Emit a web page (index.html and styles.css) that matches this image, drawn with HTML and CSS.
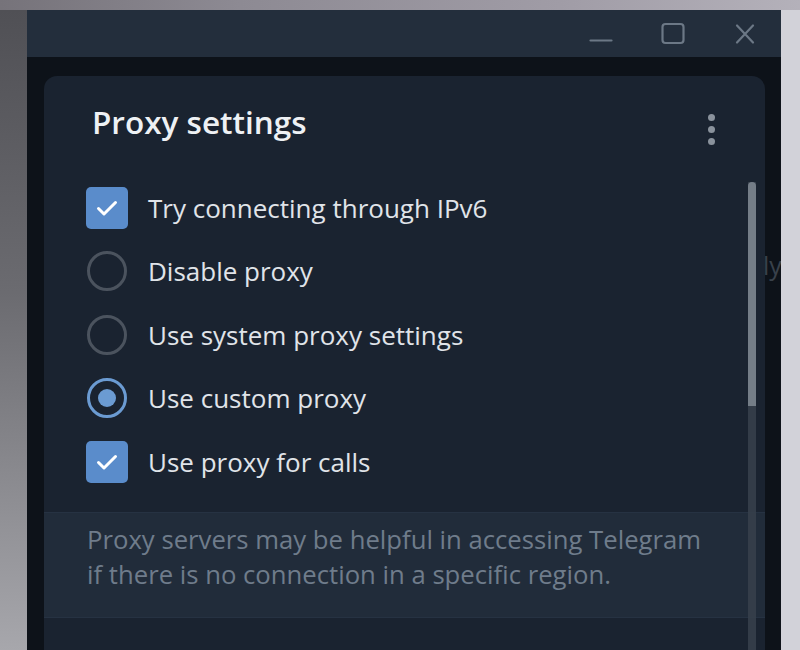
FILE: index.html
```html
<!DOCTYPE html>
<html lang="en">
<head>
    <meta charset="UTF-8">
    <meta name="viewport" content="width=device-width, initial-scale=1.0">
    <title>Proxy settings</title>
    <link rel="stylesheet" href="styles.css">
</head>
<body>
    <div class="window">
        <header class="titlebar">
            <button class="win-btn" aria-label="Minimize">
                <svg width="24" height="24" viewBox="0 0 24 24"><path d="M1.5 18.5h21" /></svg>
            </button>
            <button class="win-btn" aria-label="Maximize">
                <svg width="24" height="24" viewBox="0 0 24 24"><rect x="1.5" y="2" width="21" height="19" rx="3" /></svg>
            </button>
            <button class="win-btn" aria-label="Close">
                <svg width="24" height="24" viewBox="0 0 24 24"><path d="M4 3.5l16 17M20 3.5l-16 17" /></svg>
            </button>
        </header>

        <div class="window-body">
            <span class="behind-text">ly</span>

            <div class="card">
                <div class="card-header">
                    <h1 class="card-title">Proxy settings</h1>
                    <span class="menu-dots"><i></i><i></i><i></i></span>
                </div>

                <ul class="options">
                    <li class="option">
                        <span class="checkbox">
                            <svg width="24" height="24" viewBox="0 0 24 24"><path d="M3.5 12.5l5.5 5.5 11.5-11.5" /></svg>
                        </span>
                        <span class="option-label">Try connecting through IPv6</span>
                    </li>
                    <li class="option">
                        <span class="radio"></span>
                        <span class="option-label">Disable proxy</span>
                    </li>
                    <li class="option">
                        <span class="radio"></span>
                        <span class="option-label">Use system proxy settings</span>
                    </li>
                    <li class="option">
                        <span class="radio radio-on"></span>
                        <span class="option-label">Use custom proxy</span>
                    </li>
                    <li class="option">
                        <span class="checkbox">
                            <svg width="24" height="24" viewBox="0 0 24 24"><path d="M3.5 12.5l5.5 5.5 11.5-11.5" /></svg>
                        </span>
                        <span class="option-label">Use proxy for calls</span>
                    </li>
                </ul>

                <div class="info">
                    <p>Proxy servers may be helpful in accessing Telegram<br>if there is no connection in a specific region.</p>
                </div>

                <div class="scrollbar"><div class="scroll-thumb"></div></div>
            </div>
        </div>
    </div>
</body>
</html>
```

FILE: styles.css
```css
/* ===== RESET & BASE ===== */
* {
    margin: 0;
    padding: 0;
    box-sizing: border-box;
}

html, body {
    width: 800px;
    height: 650px;
    overflow: hidden;
}

body {
    font-family: "Open Sans", "Noto Sans", sans-serif;
    color: #e4e8ec;
    background:
        linear-gradient(to right, #76737a 0, #8d8a93 30%, #a09ca6 70%, #b4b1ba 100%) top / 100% 10px no-repeat,
        linear-gradient(to right, rgba(0, 0, 0, 0) 781px, #d2d2d9 781px),
        linear-gradient(to bottom, #4f4f54 0%, #6b6b70 45%, #a7a7ac 100%);
    padding: 10px 19px 0 27px;
}

/* ===== WINDOW ===== */
.window {
    width: 754px;
    height: 640px;
    display: flex;
    flex-direction: column;
    background: #0d1219;
}

.titlebar {
    height: 47px;
    flex-shrink: 0;
    display: flex;
    justify-content: flex-end;
    background: #232e3c;
}

.win-btn {
    width: 72px;
    height: 47px;
    display: flex;
    align-items: center;
    justify-content: center;
    background: none;
    border: none;
}

.win-btn svg {
    fill: none;
    stroke: #6c7886;
    stroke-width: 2.2;
    stroke-linecap: round;
}

.window-body {
    position: relative;
    flex: 1;
    padding: 19px 16px 0 17px;
    display: flex;
    overflow: hidden;
}

.behind-text {
    position: absolute;
    left: 736px;
    top: 191px;
    font-size: 25px;
    color: #39414b;
}

/* ===== CARD ===== */
.card {
    position: relative;
    flex: 1;
    background: #1a2330;
    border-radius: 13px 13px 0 0;
    padding-top: 26px;
}

.card-header {
    height: 40px;
    display: flex;
    align-items: flex-start;
    justify-content: space-between;
    padding: 0 50px 0 48px;
}

.card-title {
    font-size: 31.5px;
    line-height: 40px;
    font-weight: 600;
    color: #eef1f4;
}

.menu-dots {
    display: flex;
    flex-direction: column;
    gap: 5px;
    margin-top: 11.5px;
}

.menu-dots i {
    width: 7px;
    height: 7px;
    border-radius: 50%;
    background: #8a929c;
}

/* ===== OPTIONS ===== */
.options {
    list-style: none;
    margin-top: 34px;
}

.option {
    height: 63.5px;
    display: flex;
    align-items: center;
    gap: 20px;
    padding-left: 42px;
}

.option-label {
    font-size: 26px;
    color: #e0e4e9;
}

.checkbox {
    width: 42px;
    height: 42px;
    flex-shrink: 0;
    border-radius: 5px;
    background: #5a8ccb;
    display: flex;
    align-items: center;
    justify-content: center;
}

.checkbox svg {
    fill: none;
    stroke: #ffffff;
    stroke-width: 3;
    stroke-linecap: round;
    stroke-linejoin: round;
}

.radio {
    width: 40px;
    height: 40px;
    flex-shrink: 0;
    margin: 0 1px;
    border-radius: 50%;
    border: 3px solid #4b535e;
    display: flex;
    align-items: center;
    justify-content: center;
}

.radio-on {
    border-color: #6b9bd2;
}

.radio-on::after {
    content: "";
    width: 18px;
    height: 18px;
    border-radius: 50%;
    background: #6b9bd2;
}

/* ===== INFO ===== */
.info {
    margin-top: 18px;
    height: 106px;
    padding: 9.5px 0 0 43px;
    background: #212c3a;
    border-top: 1px solid #263242;
    border-bottom: 1px solid #263242;
}

.info p {
    font-size: 25.7px;
    line-height: 35px;
    color: #6f7c8b;
}

/* ===== SCROLLBAR ===== */
.scrollbar {
    position: absolute;
    left: 704px;
    top: 106px;
    bottom: 0;
    width: 8px;
    background: #363f4b;
    opacity: 0.9;
}

.scroll-thumb {
    height: 224px;
    border-radius: 4px 4px 0 0;
    background: #7e8791;
}
```
